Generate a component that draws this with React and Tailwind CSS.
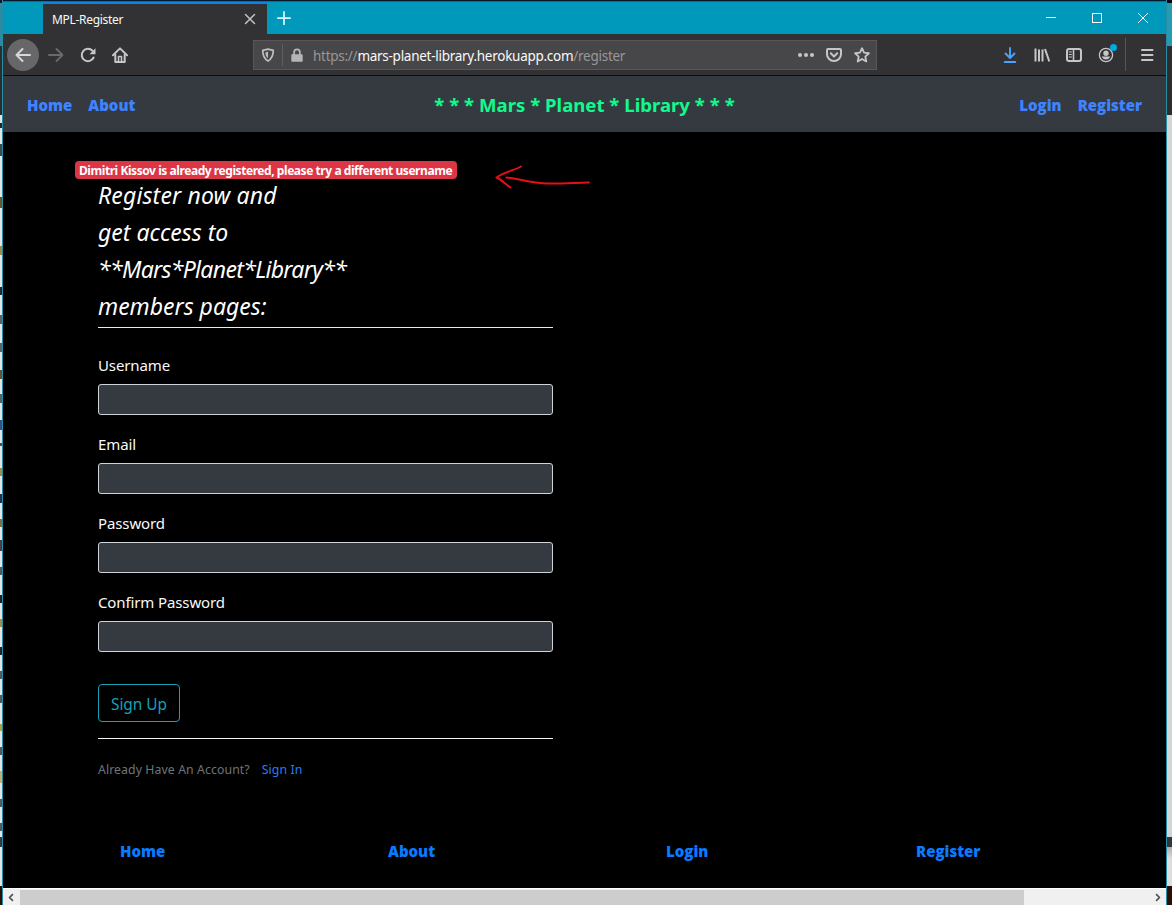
import React from "react";

const LEFT_MARKS = [
  [123, 5, "#20282c"], [144, 12, "#3a4a50"], [197, 11, "#6b5526"], [246, 9, "#a58a45"],
  [287, 8, "#222a3a"], [315, 9, "#59646a"], [343, 9, "#59646a"], [370, 9, "#6a5230"],
  [394, 9, "#4f6670"], [420, 10, "#37508a"], [443, 3, "#44506a"], [468, 8, "#a58a45"],
  [494, 9, "#22305a"], [519, 8, "#8a6c3c"], [540, 11, "#4a3c4a"], [567, 8, "#505a60"],
  [595, 8, "#20242a"], [619, 8, "#a09045"], [647, 8, "#20282c"], [671, 8, "#505a60"],
  [695, 8, "#505a60"], [724, 7, "#b0a045"], [747, 8, "#505a60"], [771, 12, "#c5b070"],
  [799, 8, "#505a60"], [823, 8, "#505a60"],
];

function Icon({ size = 16, className = "", children }) {
  return (
    <svg
      width={size}
      height={size}
      viewBox="0 0 16 16"
      fill="none"
      stroke="currentColor"
      strokeWidth="2"
      strokeLinecap="round"
      strokeLinejoin="round"
      className={`shrink-0 ${className}`}
    >
      {children}
    </svg>
  );
}

function LeftEdge() {
  return (
    <div className="relative flex w-[2px] shrink-0 flex-col overflow-hidden">
      <div className="h-[3px] bg-[#0b1a2c]" />
      <div className="h-[43px] bg-[#2b8ba5]" />
      <div className="h-[69px] bg-[#2a2c2d]" />
      <div className="h-[722px] bg-[#e0e4e5]" />
      <div className="h-[10px] bg-[#343c42]" />
      <div className="h-[39px] bg-[#e0e4e5]" />
      <div className="h-[19px] bg-[#2a0f06]" />
      {LEFT_MARKS.map(([y, h, c]) => (
        <div key={y} className="absolute left-0 w-[2px]" style={{ top: y, height: h, backgroundColor: c }} />
      ))}
    </div>
  );
}

function RightEdge() {
  return (
    <div className="flex w-[5px] shrink-0 flex-col">
      <div className="h-[3px] bg-[#05080c]" />
      <div className="h-[43px] bg-[#2799b5]" />
      <div className="h-[69px] bg-[#2c2d2e]" />
      <div className="h-[722px] bg-[#d2d5d5]" />
      <div className="h-[10px] bg-[#30363c]" />
      <div className="h-[39px] bg-linear-to-b from-[#a9adad] to-[#dcdede] to-30%" />
      <div className="h-[19px] bg-[#2a0f06]" />
    </div>
  );
}

function TitleBar() {
  return (
    <div className="flex h-[32px] bg-[#0099bc] text-white">
      <div className="ml-[40px] flex w-[224px] items-center border-t-[2px] border-[#0a84e8] bg-[#323234] pr-[11px] pl-[9px]">
        <span className="grow pt-[2px] text-[12px] leading-4 tracking-[-0.3px] text-[#f9f9fa]">MPL-Register</span>
        <Icon size={12} className="text-[#c4c4c5]">
          <path d="M2 2l12 12M14 2L2 14" />
        </Icon>
      </div>
      <div className="flex grow items-center pl-[10px]">
        <Icon size={14} className="text-[#d5f8ff]">
          <path d="M8 1v14M1 8h14" />
        </Icon>
      </div>
      <svg width="120" height="32" viewBox="0 0 120 32" fill="none" stroke="#ffffff" strokeWidth="1" className="shrink-0">
        <path d="M0 15.500h10" />
        <rect x="46.500" y="11.500" width="9" height="9" />
        <path d="M92 11l10 10M102 11l-10 10" />
      </svg>
    </div>
  );
}

function Toolbar() {
  return (
    <div className="flex h-[42px] items-center border-b border-[#0c0c0d] bg-[#323234] text-[#c6c6c7]">
      <div className="ml-[4px] flex size-[32px] items-center justify-center rounded-full bg-[#676769] text-[#d8d8d9]">
        <Icon>
          <path d="M15 8H1.500M7.500 2L1.500 8l6 6" />
        </Icon>
      </div>
      <Icon className="ml-[9px] text-[#6a6a6c]">
        <path d="M1 8h13.500M8.500 2l6 6-6 6" strokeWidth="1.800" />
      </Icon>
      <Icon className="ml-[16px]">
        <path d="M13.600 10.500A6.200 6.200 0 1 1 12.500 3.800" />
        <path d="M15.500 1.200v6h-6z" fill="currentColor" stroke="none" />
      </Icon>
      <Icon className="ml-[16px]">
        <path d="M1 8.300L8 1.400l7 6.900" />
        <path d="M3.300 7.500V15h9.400V7.500" />
        <path d="M6.500 14V9.500h3V14" strokeWidth="1.600" />
      </Icon>
      <div className="ml-[125px] flex h-[30px] w-[624px] shrink-0 items-center border border-[#5b5558] bg-[#474749]">
        <Icon size={14} className="ml-[7px] text-[#bdbdbe]">
          <path d="M8 1.200L14 2.700c0 6-1.500 9.800-6 12.200C3.500 12.500 2 8.700 2 2.700z" />
          <path d="M8 4.300v7.400C6.200 10.300 5 8 5 5z" fill="currentColor" stroke="none" />
        </Icon>
        <div className="ml-[7px] h-[22px] w-px bg-[#5f5f61]" />
        <Icon size={14} className="ml-[7px] text-[#b5b5b6]">
          <path d="M4.700 8V5a3.300 3.300 0 0 1 6.600 0v3" />
          <rect x="2.500" y="8" width="11" height="6.600" fill="currentColor" />
        </Icon>
        <span className="ml-[9px] grow pt-[2px] text-[13.5px] leading-5 tracking-[-0.27px] text-[#97979a]">
          https://<span className="text-[#f9f9fa]">mars-planet-library.herokuapp.com</span>/register
        </span>
        <Icon className="mr-[12px] text-[#c6c6c7]">
          <g fill="currentColor" stroke="none">
            <circle cx="2" cy="8" r="2" />
            <circle cx="8" cy="8" r="2" />
            <circle cx="14" cy="8" r="2" />
          </g>
        </Icon>
        <Icon className="mr-[12px]">
          <path d="M2 2h12a1 1 0 0 1 1 1v4.200a7 6.800 0 0 1-14 0V3a1 1 0 0 1 1-1z" />
          <path d="M4.800 6.300L8 9.500l3.200-3.200" />
        </Icon>
        <Icon className="mr-[6px]">
          <path d="M8 1.200l2.050 4.500 4.850.55-3.600 3.300 1 4.900L8 12l-4.300 2.450 1-4.900-3.600-3.300 4.850-.55z" strokeWidth="1.800" />
        </Icon>
      </div>
      <div className="flex grow items-center justify-end gap-[16px]">
        <Icon size={16} className="text-[#4aa2fb]">
          <path d="M8 1v9.500M3.500 6.500L8 11l4.500-4.500M2.700 15h10.600" strokeWidth="1.900" />
        </Icon>
        <Icon>
          <path d="M1.500 1.500v13M5 2.500v12M8.500 2.500v12M11 2l4.300 12.500" strokeLinecap="butt" />
        </Icon>
        <Icon>
          <rect x="1" y="2" width="14" height="12" rx="2" />
          <path d="M7.500 2v12" strokeWidth="1.600" />
          <path d="M3.200 5h2.300M3.200 7.500h2.300M3.200 10h2.300" strokeWidth="1" />
        </Icon>
        <div className="relative size-[16px]">
          <Icon>
            <circle cx="8" cy="8" r="6.600" strokeWidth="1.300" />
            <circle cx="8" cy="6.200" r="2.700" fill="currentColor" stroke="none" />
            <path d="M3.800 9.500h8.400c-.6 2-2.200 3-4.200 3s-3.600-1-4.200-3z" fill="currentColor" stroke="none" />
          </Icon>
          <div className="absolute -top-[3px] -right-[3px] size-[7px] rounded-full bg-[#00a8e0]" />
        </div>
      </div>
      <div className="mr-[13px] ml-[11px] h-[33px] w-px shrink-0 bg-[#56565a]" />
      <Icon className="mr-[11px]">
        <path d="M3 3h10.500M3 8h10.500M3 13h10.500" />
      </Icon>
    </div>
  );
}

function NavBar() {
  return (
    <nav className="flex h-[56px] items-center justify-between bg-[#343a40] px-[24px] pt-[2px] font-['Open_Sans','Noto_Sans',sans-serif] text-[15px] font-extrabold text-[#3f83ff]">
      <div className="flex w-[150px] gap-[16px]">
        <a>Home</a>
        <a>About</a>
      </div>
      <div className="font-['Noto_Sans','Open_Sans',sans-serif] text-[18.6px] font-bold whitespace-nowrap text-[#10fa8e]">* * * Mars * Planet * Library * * *</div>
      <div className="flex w-[150px] justify-end gap-[16px]">
        <a>Login</a>
        <a>Register</a>
      </div>
    </nav>
  );
}

function Field({ label }) {
  return (
    <div className="mb-[16px] flex h-[63px] flex-col">
      <label className="h-[32px] pt-[1px] text-[15px] leading-6 tracking-[-0.12px] text-[#f8f9fa]">{label}</label>
      <input className="h-[31px] w-full rounded-[3px] border border-[#ced4da] bg-[#343a40] px-2 outline-none" />
    </div>
  );
}

function RegisterPage() {
  return (
    <main className="flex h-[756px] flex-col bg-black">
      <div className="flex h-[46px] shrink-0 items-end pl-[72px]">
        <div className="mb-[-1px] flex h-[18px] w-[382px] items-center rounded-[4px] bg-[#dc3545] pt-[2px] pl-[4px] text-[12px] leading-none font-bold tracking-[-0.44px] whitespace-nowrap text-white">
          Dimitri Kissov is already registered, please try a different username
        </div>
        <svg width="96" height="26" viewBox="0 0 96 26" fill="none" stroke="#e60f18" strokeWidth="2" strokeLinecap="round" strokeLinejoin="round" className="mb-[-12px] ml-[38px]">
          <path d="M26 2.500C20 6 9 8 1.500 13.500c5 2 9 7 14 10" />
          <path d="M11.500 13.500c12 1 24 5.500 41 6 14 .5 28-.8 41.500-1" />
        </svg>
      </div>
      <form className="ml-[95px] flex w-[455px] flex-col">
        <legend className="h-[150px] w-full border-b border-[#e9ecef] text-[23px] leading-[37px] whitespace-nowrap text-white italic">
          <div className="-mt-px tracking-[0.15px]">Register now and</div>
          <div>get access to</div>
          <div className="tracking-[-0.68px]">**Mars*Planet*Library**</div>
          <div>members pages:</div>
        </legend>
        <div className="mt-[24px] flex flex-col">
          <Field label="Username" />
          <Field label="Email" />
          <Field label="Password" />
          <Field label="Confirm Password" />
        </div>
        <button type="button" className="mt-[16px] h-[38px] w-[82px] rounded-[4px] border border-[#17a2b8] pt-[3px] text-[15.4px] whitespace-nowrap text-[#17a2b8]">
          Sign Up
        </button>
        <div className="mt-[16px] flex h-[42px] items-end gap-[12px] border-t border-[#f4f4f4] text-[12.3px] leading-[20px] tracking-[0.08px] whitespace-nowrap">
          <span className="text-[#6c757d]">Already Have An Account?</span>
          <a className="text-[#267df5]">Sign In</a>
        </div>
      </form>
      <footer className="mt-[59px] flex font-['Open_Sans','Noto_Sans',sans-serif] text-[15px] leading-6 font-extrabold text-[#0a7aff]">
        <a className="ml-[117px] w-[268px]">Home</a>
        <a className="w-[278px]">About</a>
        <a className="w-[250px]">Login</a>
        <a>Register</a>
      </footer>
    </main>
  );
}

function ScrollBar() {
  return (
    <div className="flex h-[17px] items-center border-t border-white bg-[#f0f0f0] text-[#505050]">
      <div className="flex w-[17px] justify-center">
        <Icon size={9}>
          <path d="M10.500 2L4.500 8l6 6" strokeWidth="3" strokeLinecap="butt" />
        </Icon>
      </div>
      <div className="h-[15px] w-[1004px] bg-[#cdcdcd]" />
      <div className="flex grow justify-end pr-[4px]">
        <Icon size={9}>
          <path d="M5.500 2l6 6-6 6" strokeWidth="3" strokeLinecap="butt" />
        </Icon>
      </div>
    </div>
  );
}

export default function App() {
  return (
    <div className="flex h-[905px] w-[1172px] overflow-hidden bg-black font-['Noto_Sans','Open_Sans',sans-serif]">
      <LeftEdge />
      <div className="flex w-[1165px] shrink-0 flex-col border-x border-[#278da5]">
        <div className="h-px bg-[#08182c]" />
        <div className="h-px bg-[#0d6f8c]" />
        <TitleBar />
        <Toolbar />
        <NavBar />
        <RegisterPage />
        <ScrollBar />
      </div>
      <RightEdge />
    </div>
  );
}
